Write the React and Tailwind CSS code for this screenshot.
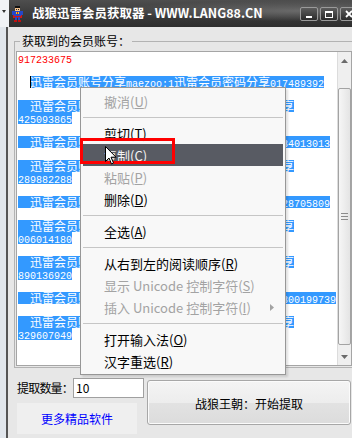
import React from "react";

// textarea rows: null = empty line
const rows = [
  { t: "917233675", red: true },
  null,
  { t: "迅雷会员账号分享maezoo:1迅雷会员密码分享017489392", first: true },
  null,
  { t: "  迅雷会员账号分享xunlei8866:1迅雷会员密码分享" },
  { t: "425093865" },
  null,
  { t: "  迅雷会员账号分享lc52013:1迅雷会员密码分享234013013" },
  null,
  { t: "  迅雷会员账号分享vip5201314:1迅雷会员密码分享" },
  { t: "289882288" },
  null,
  { t: "  迅雷会员账号分享qq66885:1迅雷会员密码分享128705809" },
  null,
  { t: "  迅雷会员账号分享ling880011:1迅雷会员密码分享" },
  { t: "006014180" },
  null,
  { t: "  迅雷会员账号分享zhanlang88:1迅雷会员密码分享" },
  { t: "890136920" },
  null,
  { t: "  迅雷会员账号分享wolf8899:1迅雷会员密码分享300199739" },
  null,
  { t: "  迅雷会员账号分享abc1234567:1迅雷会员密码分享" },
  { t: "329607049" },
  null,
  null,
];

const menu = [
  { label: "撤消", k: "U", off: true },
  "sep",
  { label: "剪切", k: "T" },
  { label: "复制", k: "C", on: true },
  { label: "粘贴", k: "P", off: true },
  { label: "删除", k: "D" },
  "sep",
  { label: "全选", k: "A" },
  "sep",
  { label: "从右到左的阅读顺序", k: "R" },
  { label: "显示 Unicode 控制字符", k: "S", off: true },
  { label: "插入 Unicode 控制字符", k: "I", off: true, sub: true },
  "sep",
  { label: "打开输入法", k: "O" },
  { label: "汉字重选", k: "R" },
];

// ascii runs get a 6px-wide mono face, like the old bitmap font
function Mixed({ text }) {
  const parts = text.split(/([\x00-\x7f]+)/).filter(Boolean);
  return parts.map((p, i) =>
    /^[\x00-\x7f]+$/.test(p) ? (
      <span key={i} className="font-['Liberation_Mono',monospace] text-[10px] leading-[0px] whitespace-pre">
        {p}
      </span>
    ) : (
      <span key={i}>{p}</span>
    )
  );
}

function Superman() {
  return (
    <svg width="11" height="16" viewBox="0 0 11 16" className="shrink-0">
      <rect x="1" y="5" width="9" height="7" fill="#d01818" />
      <rect x="3" y="0" width="5" height="2" fill="#111" />
      <rect x="3" y="2" width="5" height="3" fill="#f2c08a" />
      <rect x="4" y="3" width="1" height="1" fill="#222" />
      <rect x="6" y="3" width="1" height="1" fill="#222" />
      <rect x="2" y="5" width="7" height="5" fill="#2547c8" />
      <rect x="0" y="5" width="2" height="4" fill="#2547c8" />
      <rect x="9" y="5" width="2" height="4" fill="#2547c8" />
      <rect x="4" y="6" width="3" height="2" fill="#e8d020" />
      <rect x="5" y="6" width="1" height="2" fill="#d01818" />
      <rect x="3" y="10" width="5" height="1" fill="#d01818" />
      <rect x="3" y="11" width="2" height="3" fill="#2547c8" />
      <rect x="6" y="11" width="2" height="3" fill="#2547c8" />
      <rect x="2" y="14" width="3" height="2" fill="#c01010" />
      <rect x="6" y="14" width="3" height="2" fill="#c01010" />
    </svg>
  );
}

function CapButton({ children }) {
  return (
    <div className="w-[18px] h-[14px] shrink-0 rounded-[2px] border border-[#9a9a9a] bg-[linear-gradient(180deg,#5c5c5c,#2c2c2c)] flex items-center justify-center">
      {children}
    </div>
  );
}

function TextBox() {
  return (
    <div className="w-[336px] h-[315px] border border-[#a5a5a5] bg-white flex">
      <div className="flex-1 pl-[1px] overflow-hidden leading-[12px] text-[12px]">
        {rows.map((r, i) => {
          if (!r) return <div key={i} className="h-[12px]" />;
          if (r.red)
            return (
              <div key={i} className="h-[12px] whitespace-nowrap text-[#ff0000]">
                <Mixed text={r.t} />
              </div>
            );
          return (
            <div key={i} className="h-[12px] whitespace-nowrap flex">
              {r.first && (
                <>
                  <span className="w-[12px] h-[12px]" />
                  <span className="w-px h-[12px] bg-black -mr-px relative" />
                </>
              )}
              <span className="inline-block h-[12px] bg-[#3399ff] text-white whitespace-pre">
                <Mixed text={r.t} />
              </span>
            </div>
          );
        })}
      </div>
      {/* scrollbar */}
      <div className="w-[14px] bg-[#efefef] border-l border-[#dcdcdc] flex flex-col">
        <div className="h-[17px] flex items-center justify-center">
          <svg width="7" height="4" viewBox="0 0 7 4">
            <path d="M0 4 L3.5 0 L7 4 Z" fill="#6a6a6a" />
          </svg>
        </div>
        <div className="flex-1">
          <div className="mt-[19px] h-[257px] rounded-[2px] border border-[#a3a3a3] bg-[linear-gradient(90deg,#f6f6f6,#e4e4e4)] flex flex-col items-center justify-center gap-[2px]">
            <div className="w-[7px] h-px bg-[#8c8c8c]" />
            <div className="w-[7px] h-px bg-[#8c8c8c]" />
            <div className="w-[7px] h-px bg-[#8c8c8c]" />
          </div>
        </div>
        <div className="h-[17px] flex items-center justify-center">
          <svg width="7" height="4" viewBox="0 0 7 4">
            <path d="M0 0 L3.5 4 L7 0 Z" fill="#6a6a6a" />
          </svg>
        </div>
      </div>
    </div>
  );
}

function Menu() {
  return (
    <div className="absolute left-[80px] top-[87px] w-[206px] border border-[#979797] bg-[#f8f8f8] py-[2px] text-[13px] leading-none shadow-[2px_2px_2px_rgba(0,0,0,0.12)]">
      {menu.map((m, i) =>
        m === "sep" ? (
          <div key={i} className="h-[10px] mx-[2px] flex items-center">
            <div className="h-px w-full bg-[#c6c6c6]" />
          </div>
        ) : (
          <div
            key={i}
            className={
              "h-[22px] mx-[2px] pl-[21px] flex items-center whitespace-pre " +
              (m.on ? "bg-[#585b63] text-[#f4f4f4]" : m.off ? "text-[#a3a3a3]" : "text-black")
            }
          >
            <span>
              {m.label}(<span className="underline">{m.k}</span>)
            </span>
            {m.sub && (
              <svg width="4" height="7" viewBox="0 0 4 7" className="ml-auto mr-[9px]">
                <path d="M0 0 L4 3.5 L0 7 Z" fill="#a3a3a3" />
              </svg>
            )}
          </div>
        )
      )}
    </div>
  );
}

export default function App() {
  return (
    <div className="relative w-[352px] h-[438px] overflow-hidden flex flex-col bg-[#e7e7e7] font-['Noto_Sans_CJK_SC',sans-serif] text-[12px] text-black">
      {/* title bar */}
      <div className="flex h-[27px] shrink-0">
        <div className="w-[9px] bg-[#f1f3f6] flex items-start pt-[10px] pl-[2px]">
          <svg width="4" height="3" viewBox="0 0 4 3">
            <path d="M0 0 L4 0 L2 3 Z" fill="#333" />
          </svg>
        </div>
        <div className="flex-1 flex items-center pl-[3px] overflow-hidden bg-[radial-gradient(ellipse_at_85%_40%,#6a6a6a_0%,transparent_45%),linear-gradient(180deg,#4e4e4e_0%,#3a3a3a_55%,#2e2e2e_100%)]">
          <Superman />
          <span className="ml-[9px] text-white font-bold text-[12.5px] leading-none whitespace-nowrap">
            战狼迅雷会员获取器 - WWW.LANG88.CN
          </span>
          <div className="ml-auto mr-[-6px] self-start mt-[7px] flex gap-[2px]">
            <CapButton>
              <div className="w-[6px] h-[2px] bg-white mt-[6px]" />
            </CapButton>
            <CapButton>
              <div className="w-[8px] h-[7px] border border-t-2 border-white" />
            </CapButton>
            <CapButton>
              <svg width="8" height="8" viewBox="0 0 8 8">
                <path d="M1 1 L7 7 M7 1 L1 7" stroke="#fff" strokeWidth="1.8" />
              </svg>
            </CapButton>
          </div>
        </div>
      </div>

      <div className="flex flex-1 min-h-0">
        <div className="w-[6px] bg-[#e1e6ec]" />
        <div className="w-[2px] bg-[#555555]" />
        <div className="flex-1 flex flex-col pl-[6px] overflow-hidden">
          <fieldset className="mt-[8px] w-[345px] shrink-0 border border-[#b3b3b3] pl-[1px] pt-[4px] pb-[1px]">
            <legend className="ml-[4px] px-[2px] leading-[12px]">获取到的会员账号：</legend>
            <TextBox />
          </fieldset>

          <div className="flex mt-[10px] pl-[3px]">
            <div className="w-[127px] flex flex-col">
              <div className="flex items-center h-[20px]">
                <span className="w-[56px] shrink-0 leading-none whitespace-nowrap tracking-[-0.8px]">提取数量：</span>
                <div className="w-[71px] h-[20px] shrink-0 border border-[#a0a0a0] bg-white flex items-center pl-[2px] leading-none">
                  10
                </div>
              </div>
              <div className="mt-[5px] w-[120px] h-[31px] bg-[#efefef] flex items-center justify-center text-[#0000ff] leading-none">
                更多精品软件
              </div>
            </div>
            <button className="ml-[3px] mt-[2px] w-[204px] h-[45px] shrink-0 rounded-[3px] border border-[#a7a7a7] shadow-[inset_0_0_0_1px_#fbfbfb] bg-[linear-gradient(180deg,#f4f4f4_0%,#ededed_50%,#e2e2e2_52%,#dcdcdc_100%)] pt-[3px] leading-none text-[12px]">
              战狼王朝：开始提取
            </button>
          </div>
        </div>
      </div>

      <Menu />

      {/* red callout around 复制 */}
      <div className="absolute left-[80px] top-[138px] w-[95px] h-[26px] border-[3px] border-[#ff0000]" />

      {/* mouse pointer */}
      <svg width="12" height="19" viewBox="0 0 12 19" className="absolute left-[105px] top-[146px]">
        <path d="M0.5 0.5 L0.5 15.5 L4 12 L6.5 18 L8.5 17 L6 11.2 L11 11.2 Z" fill="#fff" stroke="#000" strokeWidth="1" />
      </svg>
    </div>
  );
}
